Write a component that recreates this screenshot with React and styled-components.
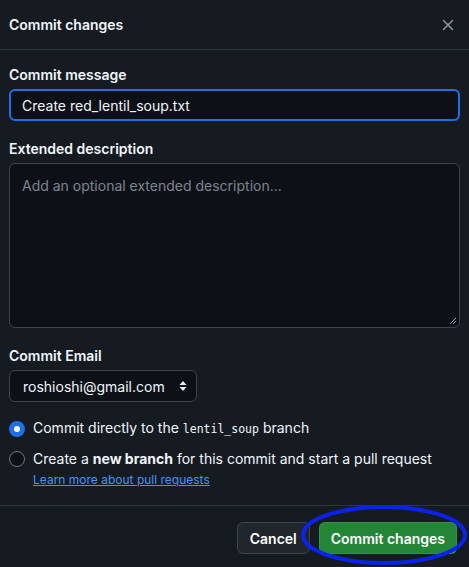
import React from "react";
import styled, { createGlobalStyle } from "styled-components";

const GlobalStyle = createGlobalStyle`
  html, body {
    margin: 0;
    padding: 0;
    background: #161b22;
  }
  body {
    font-family: Inter, "Liberation Sans", sans-serif;
    color: #e6edf3;
    -webkit-font-smoothing: antialiased;
  }
`;

const Dialog = styled.div`
  width: 469px;
  height: 567px;
  display: flex;
  flex-direction: column;
  background: #161b22;
  overflow: hidden;
`;

const Header = styled.div`
  height: 50px;
  box-sizing: border-box;
  display: flex;
  align-items: center;
  justify-content: space-between;
  padding: 0 13px 0 9px;
  border-bottom: 1px solid #30363d;
`;

const Title = styled.h1`
  margin: 0;
  font-size: 14px;
  font-weight: 600;
  line-height: 20px;
  color: #f0f6fc;
`;

const CloseButton = styled.button`
  border: 0;
  background: none;
  padding: 0;
  width: 16px;
  height: 16px;
  display: flex;
  align-items: center;
  justify-content: center;
  color: #9198a1;
`;

const Body = styled.div`
  flex: 1;
  display: flex;
  flex-direction: column;
  padding: 15px 9px 0 9px;
`;

const Field = styled.div`
  display: flex;
  flex-direction: column;
  gap: 4px;
  margin-bottom: ${(p) => p.$gap || 18}px;
`;

const Label = styled.label`
  font-size: 14px;
  font-weight: 600;
  line-height: 20px;
  color: #f0f6fc;
`;

const TextInput = styled.div`
  height: 32px;
  box-sizing: border-box;
  border: 2px solid #1f6feb;
  border-radius: 6px;
  background: #0d1117;
  padding: 0 11px;
  display: flex;
  align-items: center;
  font-size: 14px;
  color: #f0f6fc;
`;

const TextArea = styled.div`
  position: relative;
  height: 165px;
  box-sizing: border-box;
  border: 1px solid #3d444d;
  border-radius: 6px;
  background: #0d1117;
  padding: 12px 12px;
  font-size: 14px;
  line-height: 20px;
  color: #7d8590;
`;

const Grip = styled.svg`
  position: absolute;
  right: 2px;
  bottom: 2px;
`;

const Select = styled.div`
  width: 188px;
  height: 32px;
  box-sizing: border-box;
  border: 1px solid #3d444d;
  border-radius: 6px;
  background: #0d1117;
  padding: 0 9px 0 13px;
  display: flex;
  align-items: center;
  justify-content: space-between;
  font-size: 14px;
  color: #f0f6fc;
`;

const Options = styled.div`
  display: flex;
  flex-direction: column;
  gap: 10px;
`;

const Option = styled.div`
  display: grid;
  grid-template-columns: 16px 1fr;
  column-gap: 8px;
  align-items: center;
  font-size: 14px;
  line-height: 20px;
  color: #f0f6fc;
`;

const Radio = styled.span`
  width: 16px;
  height: 16px;
  box-sizing: border-box;
  border-radius: 50%;
  border: ${(p) => (p.$checked ? "5px solid #1f6feb" : "1px solid #6e7681")};
  background: ${(p) => (p.$checked ? "#ffffff" : "#0d1117")};
`;

const Code = styled.code`
  font-family: "DejaVu Sans Mono", "Liberation Mono", monospace;
  font-size: 11.5px;
`;

const Link = styled.a`
  grid-column: 2;
  font-size: 12px;
  line-height: 18px;
  color: #4493f8;
  text-decoration: underline;
  margin-top: 2px;
`;

const Footer = styled.div`
  position: relative;
  height: 62px;
  box-sizing: border-box;
  border-top: 1px solid #30363d;
  display: flex;
  justify-content: flex-end;
  align-items: flex-start;
  gap: 9px;
  padding: 16px 12px 0 0;
`;

const Button = styled.button`
  height: 32px;
  box-sizing: border-box;
  padding: 0 ${(p) => (p.$primary ? 11 : 12)}px;
  border-radius: 6px;
  border: 1px solid
    ${(p) => (p.$primary ? "rgba(240,246,252,0.1)" : "#3d444d")};
  background: ${(p) => (p.$primary ? "#238636" : "#21262d")};
  color: #ffffff;
  font-family: inherit;
  font-size: 14px;
  font-weight: 600;
`;

const Annotation = styled.svg`
  position: absolute;
  left: 300px;
  top: -2px;
  pointer-events: none;
`;

export default function App() {
  return (
    <>
      <GlobalStyle />
      <Dialog>
        <Header>
          <Title>Commit changes</Title>
          <CloseButton aria-label="Close">
            <svg width="12" height="12" viewBox="0 0 12 12">
              <path
                d="M1.5 1.5l9 9M10.5 1.5l-9 9"
                stroke="currentColor"
                strokeWidth="1.5"
                strokeLinecap="round"
              />
            </svg>
          </CloseButton>
        </Header>
        <Body>
          <Field>
            <Label>Commit message</Label>
            <TextInput>Create red_lentil_soup.txt</TextInput>
          </Field>
          <Field>
            <Label>Extended description</Label>
            <TextArea>
              Add an optional extended description...
              <Grip width="8" height="8" viewBox="0 0 8 8">
                <path d="M7 1L1 7M7 4L4 7" stroke="#8b949e" strokeWidth="1" />
              </Grip>
            </TextArea>
          </Field>
          <Field $gap={16}>
            <Label>Commit Email</Label>
            <Select>
              roshioshi@gmail.com
              <svg width="8" height="12" viewBox="0 0 8 12">
                <path d="M4 1L7.5 5H0.5Z M4 11L0.5 7H7.5Z" fill="#e6edf3" />
              </svg>
            </Select>
          </Field>
          <Options>
            <Option>
              <Radio $checked />
              <span>
                Commit directly to the <Code>lentil_soup</Code> branch
              </span>
            </Option>
            <Option>
              <Radio />
              <span>
                Create a <b>new branch</b> for this commit and start a pull
                request
              </span>
              <Link href="#">Learn more about pull requests</Link>
            </Option>
          </Options>
        </Body>
        <Footer>
          <Button>Cancel</Button>
          <Button $primary>Commit changes</Button>
          <Annotation width="170" height="62" viewBox="0 0 170 62">
            <ellipse
              cx="84"
              cy="31"
              rx="81"
              ry="28"
              fill="none"
              stroke="#0a22f0"
              strokeWidth="4"
            />
          </Annotation>
        </Footer>
      </Dialog>
    </>
  );
}
